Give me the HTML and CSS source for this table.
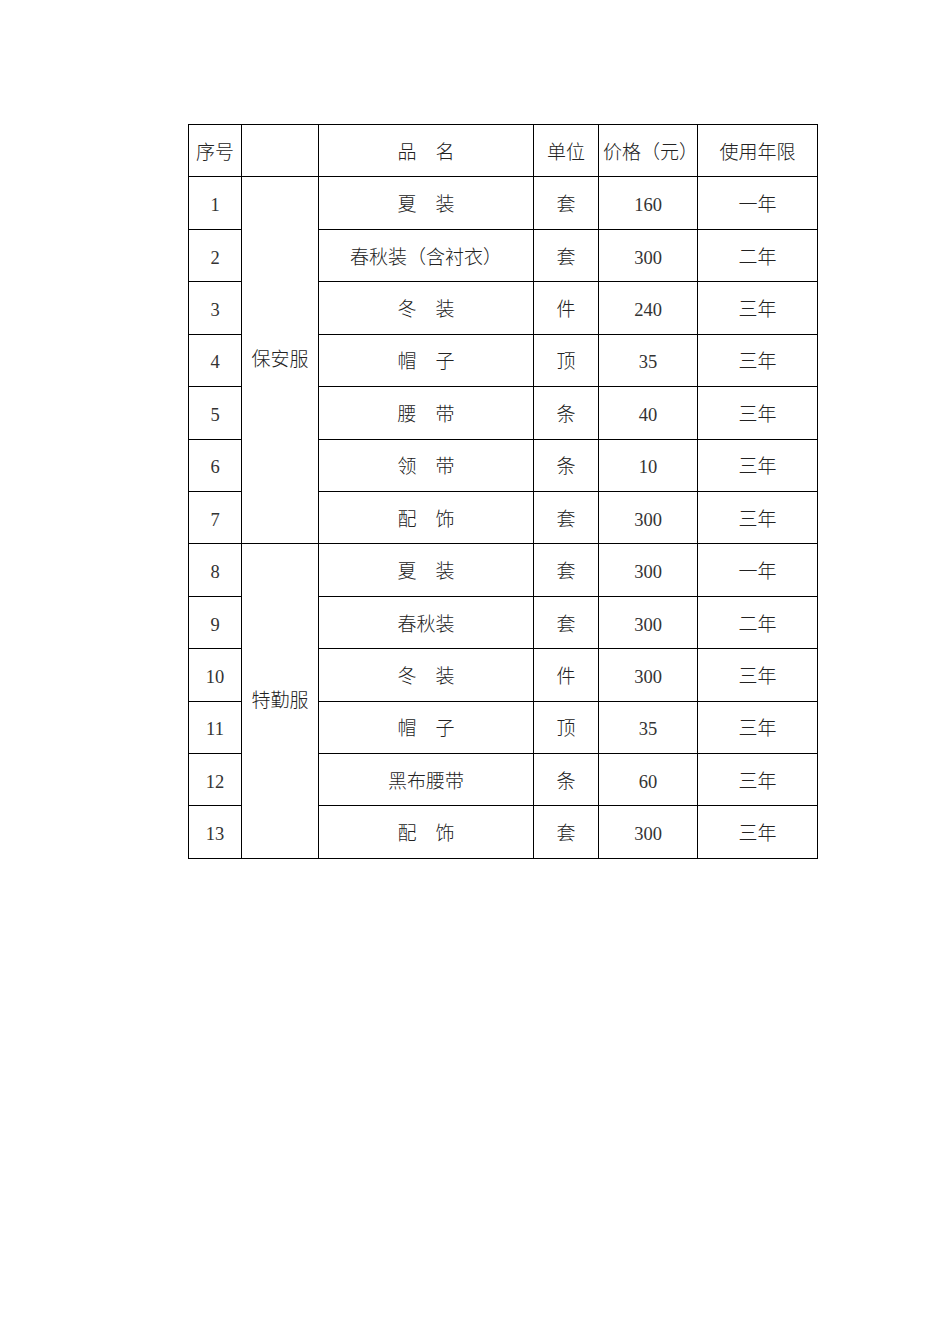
FILE: index.html
```html
<!DOCTYPE html>
<html lang="zh-CN">
<head>
<meta charset="utf-8">
<title>服装价格表</title>
<link rel="stylesheet" href="styles.css">
</head>
<body>
<div class="page">
<table class="sheet">
<colgroup>
<col class="c-no"><col class="c-cat"><col class="c-name"><col class="c-unit"><col class="c-price"><col class="c-life">
</colgroup>
<tr class="head"><td>序号</td><td></td><td>品　名</td><td>单位</td><td class="price-h">价格（元）</td><td>使用年限</td></tr>
<tr><td class="num">1</td><td rowspan="7" class="cat">保安服</td><td>夏　装</td><td>套</td><td class="num">160</td><td>一年</td></tr>
<tr><td class="num">2</td><td>春秋装（含衬衣）</td><td>套</td><td class="num">300</td><td>二年</td></tr>
<tr><td class="num">3</td><td>冬　装</td><td>件</td><td class="num">240</td><td>三年</td></tr>
<tr><td class="num">4</td><td>帽　子</td><td>顶</td><td class="num">35</td><td>三年</td></tr>
<tr><td class="num">5</td><td>腰　带</td><td>条</td><td class="num">40</td><td>三年</td></tr>
<tr><td class="num">6</td><td>领　带</td><td>条</td><td class="num">10</td><td>三年</td></tr>
<tr><td class="num">7</td><td>配　饰</td><td>套</td><td class="num">300</td><td>三年</td></tr>
<tr><td class="num">8</td><td rowspan="6" class="cat">特勤服</td><td>夏　装</td><td>套</td><td class="num">300</td><td>一年</td></tr>
<tr><td class="num">9</td><td>春秋装</td><td>套</td><td class="num">300</td><td>二年</td></tr>
<tr><td class="num">10</td><td>冬　装</td><td>件</td><td class="num">300</td><td>三年</td></tr>
<tr><td class="num">11</td><td>帽　子</td><td>顶</td><td class="num">35</td><td>三年</td></tr>
<tr><td class="num">12</td><td>黑布腰带</td><td>条</td><td class="num">60</td><td>三年</td></tr>
<tr><td class="num">13</td><td>配　饰</td><td>套</td><td class="num">300</td><td>三年</td></tr>
</table>
</div>
</body>
</html>
```
FILE: styles.css
```css
html, body {
  margin: 0;
  padding: 0;
  background: #fff;
}
.page {
  width: 950px;
  height: 1344px;
  padding: 124px 0 0 188px;
  box-sizing: border-box;
}
.sheet {
  border-collapse: collapse;
  table-layout: fixed;
  width: 629px;
  font-family: "Liberation Serif", "Noto Sans CJK SC", serif;
  font-size: 19px;
  font-weight: 300;
  color: #222;
}
.c-no { width: 53px; }
.c-cat { width: 77px; }
.c-name { width: 215px; }
.c-unit { width: 65px; }
.c-price { width: 99px; }
.c-life { width: 120px; }
.sheet td {
  border: 1px solid #000;
  height: 52.43px;
  padding: 4px 0 0 0;
  box-sizing: border-box;
  text-align: center;
  vertical-align: middle;
  line-height: 20px;
  white-space: nowrap;
  overflow: visible;
}
.sheet .num {
  font-size: 18.5px;
  font-weight: 400;
  color: #333;
}
.sheet .cat {
  padding-top: 0;
}
.sheet .price-h {
  text-align: left;
  padding-left: 4px;
}
```
